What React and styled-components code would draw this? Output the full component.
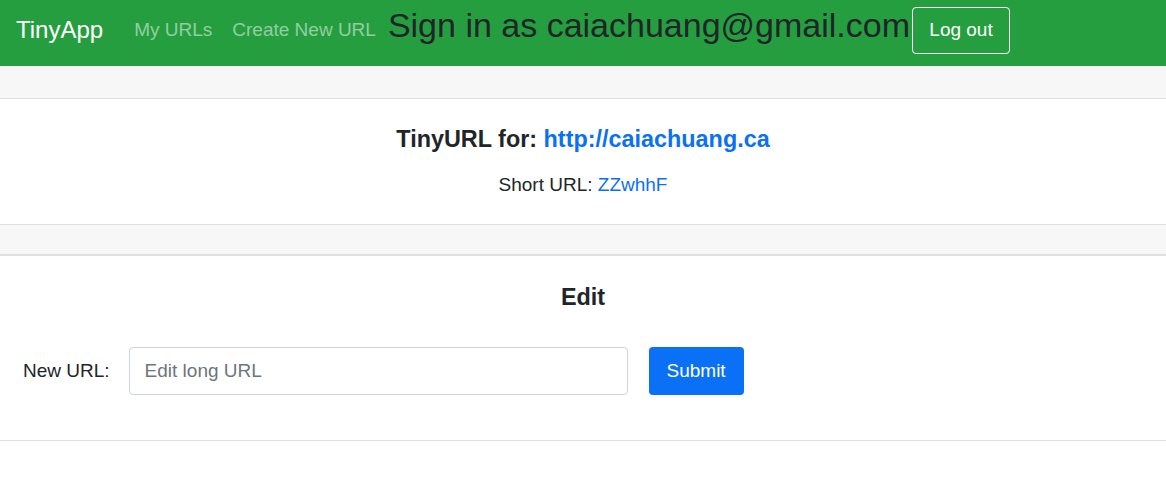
import React from "react";
import styled, { createGlobalStyle } from "styled-components";

const GlobalStyle = createGlobalStyle`
  html, body {
    margin: 0;
    padding: 0;
    background: #fff;
  }
  body {
    font-family: "Liberation Sans", Arial, Helvetica, sans-serif;
    color: #212529;
  }
  * {
    box-sizing: border-box;
  }
`;

export default function App() {
  return (
    <>
      <GlobalStyle />
      <Navbar>
        <Brand href="#">TinyApp</Brand>
        <NavList>
          <NavLink href="#">My URLs</NavLink>
          <NavLink href="#">Create New URL</NavLink>
        </NavList>
        <UserHeading>Sign in as caiachuang@gmail.com</UserHeading>
        <LogoutButton type="button">Log out</LogoutButton>
      </Navbar>

      <Band />
      <Panel>
        <PanelTitle>
          TinyURL for: <Link href="#">http://caiachuang.ca</Link>
        </PanelTitle>
        <ShortLine>
          Short URL: <ShortLink href="#">ZZwhhF</ShortLink>
        </ShortLine>
      </Panel>

      <Band $thick />
      <Panel $edit>
        <PanelTitle>Edit</PanelTitle>
        <EditForm onSubmit={(e) => e.preventDefault()}>
          <Label htmlFor="longURL">New URL:</Label>
          <Input id="longURL" name="longURL" placeholder="Edit long URL" />
          <SubmitButton type="submit">Submit</SubmitButton>
        </EditForm>
      </Panel>
    </>
  );
}

// ===== Styles =====

const Navbar = styled.nav`
  height: 66px;
  padding: 0 16px 6px;
  background-color: #259e3f;
  display: flex;
  align-items: center;
`;

const Brand = styled.a`
  font-size: 24px;
  line-height: 1.2;
  color: #fff;
  text-decoration: none;
  margin-right: 21px;
`;

const NavList = styled.div`
  display: flex;
  align-items: center;
`;

const NavLink = styled.a`
  padding: 0 10px;
  font-size: 19px;
  line-height: 1.5;
  color: rgba(255, 255, 255, 0.5);
  text-decoration: none;
`;

const UserHeading = styled.h2`
  margin: 0 0 10px 2px;
  font-size: 34px;
  font-weight: 400;
  line-height: 1.2;
  color: #212529;
  white-space: nowrap;
`;

const LogoutButton = styled.button`
  margin-left: 2px;
  width: 98px;
  height: 47px;
  padding: 0;
  border: 1px solid #fff;
  border-radius: 4px;
  background: transparent;
  color: #fff;
  font-family: inherit;
  font-size: 19px;
  cursor: pointer;
`;

// bande grise entre les cartes
const Band = styled.div`
  height: ${(p) => (p.$thick ? "31px" : "33px")};
  background-color: #f7f7f7;
  border-bottom: ${(p) => (p.$thick ? "2px" : "1px")} solid #dfdfdf;
`;

const Panel = styled.section`
  background: #fff;
  border-bottom: 1px solid #dfdfdf;
  display: flex;
  flex-direction: column;
  align-items: center;
  padding: ${(p) => (p.$edit ? "27px 24px 45px" : "26px 24px 25px")};
`;

const PanelTitle = styled.h5`
  margin: 0;
  font-size: 23.4px;
  font-weight: 700;
  line-height: 28px;
  color: #212529;
`;

const Link = styled.a`
  color: #0a70f5;
  text-decoration: none;
`;

const ShortLine = styled.p`
  margin: 18px 0 0;
  font-size: 19px;
  line-height: 28px;
  color: #212529;
`;

const ShortLink = styled(Link)`
  font-weight: 400;
`;

const EditForm = styled.form`
  align-self: stretch;
  margin-top: 36px;
  display: flex;
  align-items: center;
`;

const Label = styled.label`
  font-size: 19px;
  color: #212529;
  margin: 0 19px 0 -1px;
`;

const Input = styled.input`
  width: 499px;
  height: 48px;
  padding: 0 15px;
  border: 1px solid #ced4da;
  border-radius: 4px;
  font-family: inherit;
  font-size: 19px;
  color: #495057;

  &::placeholder {
    color: #6c757d;
  }
`;

const SubmitButton = styled.button`
  margin-left: 21px;
  width: 95px;
  height: 48px;
  padding: 0;
  border: none;
  border-radius: 4px;
  background-color: #0a70f5;
  color: #fff;
  font-family: inherit;
  font-size: 19px;
  cursor: pointer;
`;
